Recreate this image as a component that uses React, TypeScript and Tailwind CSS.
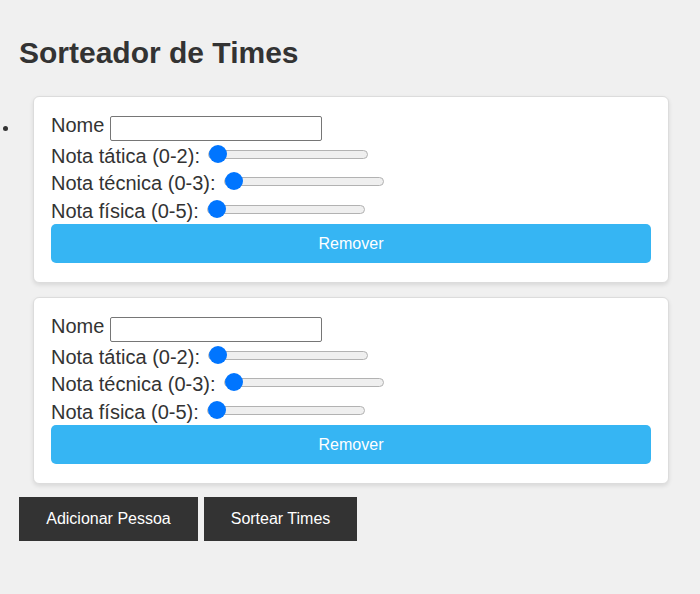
import { useState } from "react";

type Pessoa = { id: number; nome: string; tatica: number; tecnica: number; fisica: number };

const rangeCls =
  "appearance-none bg-transparent h-[18px] cursor-pointer " +
  "[&::-webkit-slider-runnable-track]:h-[9px] [&::-webkit-slider-runnable-track]:rounded-full [&::-webkit-slider-runnable-track]:bg-[#efefef] [&::-webkit-slider-runnable-track]:border [&::-webkit-slider-runnable-track]:border-[#b2b2b2] " +
  "[&::-webkit-slider-thumb]:appearance-none [&::-webkit-slider-thumb]:w-[18px] [&::-webkit-slider-thumb]:h-[18px] [&::-webkit-slider-thumb]:rounded-full [&::-webkit-slider-thumb]:bg-[#0075ff] [&::-webkit-slider-thumb]:mt-[-5.5px]";

function Card({ p, bullet, onRemove }: { p: Pessoa; bullet?: boolean; onRemove: () => void }) {
  return (
    <div className="relative bg-white border border-[#dcdcdc] rounded-[6px] shadow-[0_2px_4px_rgba(0,0,0,0.1)] px-[17px] pt-[17px] pb-[19px]">
      {bullet && <div className="absolute left-[-31px] top-[29px] w-[5px] h-[5px] rounded-full bg-[#333]" />}
      <div className="flex items-start h-[31px]">
        <span className="leading-[23px]">Nome</span>
        <input type="text" className="ml-[6px] mt-[2px] w-[212px] h-[25px] border border-[#767676] rounded-[2px] bg-white outline-none px-1 text-[13px]" defaultValue={p.nome} />
      </div>
      <div className="flex items-start h-[27px]">
        <span className="leading-[23px]">Nota tática (0-2):</span>
        <input type="range" min={0} max={2} defaultValue={p.tatica} className={rangeCls + " ml-[8px] w-[160px]"} />
      </div>
      <div className="flex items-start h-[28px]">
        <span className="leading-[23px]">Nota técnica (0-3):</span>
        <input type="range" min={0} max={3} defaultValue={p.tecnica} className={rangeCls + " ml-[8px] w-[160px]"} />
      </div>
      <div className="flex items-start h-[24px]">
        <span className="leading-[23px]">Nota física (0-5):</span>
        <input type="range" min={0} max={5} defaultValue={p.fisica} className={rangeCls + " ml-[8px] w-[158px]"} />
      </div>
      <button onClick={onRemove} className="w-full h-[39px] bg-[#36b5f3] text-white text-[16px] rounded-[5px]">
        Remover
      </button>
    </div>
  );
}

export default function App() {
  const [pessoas, setPessoas] = useState<Pessoa[]>([
    { id: 1, nome: "", tatica: 0, tecnica: 0, fisica: 0 },
    { id: 2, nome: "", tatica: 0, tecnica: 0, fisica: 0 },
  ]);

  return (
    <div className="min-h-screen bg-[#f0f0f0] text-[#333] px-[19px] pt-[36px] pb-10 text-[20px]" style={{ fontFamily: '"Liberation Sans", Arial, sans-serif' }}>
      <h1 className="text-[30px] font-bold leading-[34px] h-[34px] text-[#333]">Sorteador de Times</h1>
      <div className="mt-[26px] pl-[14px] pr-[12px] flex flex-col gap-[14px]">
        {pessoas.map((p, i) => (
          <Card key={p.id} p={p} bullet={i === 0} onRemove={() => setPessoas(pessoas.filter((x) => x.id !== p.id))} />
        ))}
      </div>
      <div className="mt-[13px] flex gap-[6px]">
        <button
          className="h-[44px] w-[179px] bg-[#333] text-white text-[16px]"
          onClick={() => setPessoas([...pessoas, { id: Date.now(), nome: "", tatica: 0, tecnica: 0, fisica: 0 }])}
        >
          Adicionar Pessoa
        </button>
        <button className="h-[44px] w-[153px] bg-[#333] text-white text-[16px]">Sortear Times</button>
      </div>
    </div>
  );
}
